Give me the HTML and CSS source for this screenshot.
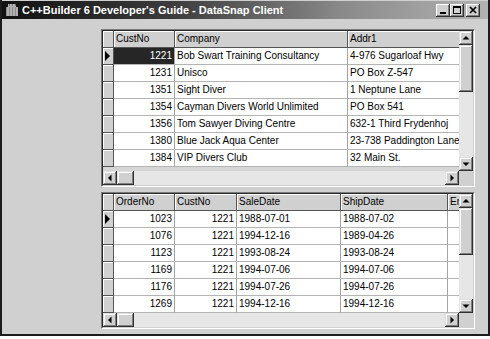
FILE: index.html
```html
<!DOCTYPE html>
<html>
<head>
<meta charset="utf-8">
<title>DataSnap Client</title>
<link rel="stylesheet" href="styles.css">
</head>
<body>
<div class="window">
  <div class="titlebar">
    <svg class="appicon" width="14" height="14" viewBox="0 0 14 14">
      <rect x="1" y="4" width="12" height="9" fill="#8c8c8c"/>
      <path d="M3 4v9M6 4v9M9 4v9M12 4v9" stroke="#d6d6d6" stroke-width="1"/>
      <rect x="3" y="1" width="8" height="3" fill="#b4b4b4"/>
      <path d="M4 2h1M7 2h1M10 2h1" stroke="#3a3a3a"/>
    </svg>
    <span class="title">C++Builder 6 Developer's Guide - DataSnap Client</span>
    <div class="capbtns">
      <div class="capbtn"><svg width="14" height="13" viewBox="0 0 14 13"><rect x="4" y="8" width="6" height="2" fill="#000"/></svg></div>
      <div class="capbtn"><svg width="14" height="13" viewBox="0 0 14 13"><path d="M3 2h8v8H3z M4 4h6v5H4z" fill="#000" fill-rule="evenodd"/></svg></div>
      <div class="capbtn close"><svg width="14" height="13" viewBox="0 0 14 13"><path d="M4 3l6 6M10 3l-6 6" stroke="#000" stroke-width="1.7"/></svg></div>
    </div>
  </div>

  <div class="client">
    <div class="grid grid-top">
      <div class="grid-inner">
        <div class="cells cols-top">
          <div class="row"><div class="c fx"></div><div class="c fx">CustNo</div><div class="c fx">Company</div><div class="c fx">Addr1</div></div>
          <div class="row"><div class="c fx ind"><span class="ptr"></span></div><div class="c num sel">1221</div><div class="c">Bob Swart Training Consultancy</div><div class="c">4-976 Sugarloaf Hwy</div></div>
          <div class="row"><div class="c fx"></div><div class="c num">1231</div><div class="c">Unisco</div><div class="c">PO Box Z-547</div></div>
          <div class="row"><div class="c fx"></div><div class="c num">1351</div><div class="c">Sight Diver</div><div class="c">1 Neptune Lane</div></div>
          <div class="row"><div class="c fx"></div><div class="c num">1354</div><div class="c">Cayman Divers World Unlimited</div><div class="c">PO Box 541</div></div>
          <div class="row"><div class="c fx"></div><div class="c num">1356</div><div class="c">Tom Sawyer Diving Centre</div><div class="c">632-1 Third Frydenhoj</div></div>
          <div class="row"><div class="c fx"></div><div class="c num">1380</div><div class="c">Blue Jack Aqua Center</div><div class="c">23-738 Paddington Lane</div></div>
          <div class="row"><div class="c fx"></div><div class="c num">1384</div><div class="c">VIP Divers Club</div><div class="c">32 Main St.</div></div>
        </div>
        <div class="vscroll">
          <div class="sb-btn"><svg width="14" height="14" viewBox="0 0 14 14"><path d="M7 5l3.5 3.5h-7z" fill="#000"/></svg></div>
          <div class="sb-thumb v"></div>
          <div class="sb-track"></div>
          <div class="sb-btn"><svg width="14" height="14" viewBox="0 0 14 14"><path d="M3.5 5.5h7L7 9z" fill="#000"/></svg></div>
        </div>
        <div class="hscroll">
          <div class="sb-btn"><svg width="14" height="14" viewBox="0 0 14 14"><path d="M5 7l3.5-3.5v7z" fill="#000"/></svg></div>
          <div class="sb-thumb h"></div>
          <div class="sb-track"></div>
          <div class="sb-btn"><svg width="14" height="14" viewBox="0 0 14 14"><path d="M5.5 3.5v7L9 7z" fill="#000"/></svg></div>
        </div>
        <div class="corner"></div>
      </div>
    </div>

    <div class="grid grid-bottom">
      <div class="grid-inner">
        <div class="cells cols-bottom">
          <div class="row"><div class="c fx"></div><div class="c fx">OrderNo</div><div class="c fx">CustNo</div><div class="c fx">SaleDate</div><div class="c fx">ShipDate</div><div class="c fx">EmpNo</div></div>
          <div class="row"><div class="c fx ind"><span class="ptr"></span></div><div class="c num">1023</div><div class="c num">1221</div><div class="c">1988-07-01</div><div class="c">1988-07-02</div><div class="c"></div></div>
          <div class="row"><div class="c fx"></div><div class="c num">1076</div><div class="c num">1221</div><div class="c">1994-12-16</div><div class="c">1989-04-26</div><div class="c"></div></div>
          <div class="row"><div class="c fx"></div><div class="c num">1123</div><div class="c num">1221</div><div class="c">1993-08-24</div><div class="c">1993-08-24</div><div class="c"></div></div>
          <div class="row"><div class="c fx"></div><div class="c num">1169</div><div class="c num">1221</div><div class="c">1994-07-06</div><div class="c">1994-07-06</div><div class="c"></div></div>
          <div class="row"><div class="c fx"></div><div class="c num">1176</div><div class="c num">1221</div><div class="c">1994-07-26</div><div class="c">1994-07-26</div><div class="c"></div></div>
          <div class="row"><div class="c fx"></div><div class="c num">1269</div><div class="c num">1221</div><div class="c">1994-12-16</div><div class="c">1994-12-16</div><div class="c"></div></div>
        </div>
        <div class="vscroll">
          <div class="sb-btn"><svg width="14" height="14" viewBox="0 0 14 14"><path d="M7 5l3.5 3.5h-7z" fill="#000"/></svg></div>
          <div class="sb-thumb v"></div>
          <div class="sb-track"></div>
          <div class="sb-btn"><svg width="14" height="14" viewBox="0 0 14 14"><path d="M3.5 5.5h7L7 9z" fill="#000"/></svg></div>
        </div>
        <div class="hscroll">
          <div class="sb-btn"><svg width="14" height="14" viewBox="0 0 14 14"><path d="M5 7l3.5-3.5v7z" fill="#000"/></svg></div>
          <div class="sb-thumb h"></div>
          <div class="sb-track"></div>
          <div class="sb-btn"><svg width="14" height="14" viewBox="0 0 14 14"><path d="M5.5 3.5v7L9 7z" fill="#000"/></svg></div>
        </div>
        <div class="corner"></div>
      </div>
    </div>
  </div>
</div>
</body>
</html>
```

FILE: styles.css
```css
* { box-sizing: border-box; }

html, body {
  margin: 0;
  padding: 0;
  background: #ffffff;
}

body {
  width: 490px;
  height: 339px;
  overflow: hidden;
  font-family: "Liberation Sans", Arial, sans-serif;
  font-size: 10px;
  color: #000;
}

.window {
  width: 490px;
  height: 336px;
  background: #d0d0d0;
  border-left: 2px solid #1c1c1c;
  border-right: 2px solid #1c1c1c;
  border-bottom: 2px solid #1c1c1c;
  padding-top: 1px;
  display: flex;
  flex-direction: column;
}

/* ---------- title bar ---------- */
.titlebar {
  height: 18px;
  display: flex;
  align-items: center;
  background: linear-gradient(to right, #111111 0%, #3c3c3c 35%, #8a8a8a 70%, #b2b2b2 100%);
  padding-left: 3px;
}

.appicon {
  flex: none;
  display: block;
}

.title {
  margin-left: 3px;
  color: #ffffff;
  font-weight: bold;
  font-size: 11px;
  white-space: nowrap;
}

.capbtns {
  margin-left: auto;
  padding-right: 8px;
  display: flex;
}

.capbtn {
  width: 14px;
  height: 13px;
  background: #d0d0d0;
  box-shadow: inset -1px -1px #303030, inset 1px 1px #ffffff, inset -2px -2px #808080;
}

.capbtn svg { display: block; }

.capbtn.close { margin-left: 2px; }

/* ---------- client ---------- */
.client {
  flex: 1;
  padding: 10px 0 0 99px;
  display: flex;
  flex-direction: column;
  gap: 5px;
}

.grid {
  width: 374px;
  border: 1px solid;
  border-color: #7a7a7a #ffffff #ffffff #7a7a7a;
}

.grid-top { height: 158px; }
.grid-bottom { height: 137px; }

.grid-inner {
  height: 100%;
  border: 1px solid;
  border-color: #2a2a2a #d0d0d0 #d0d0d0 #2a2a2a;
  display: grid;
  grid-template-columns: 1fr 14px;
  grid-template-rows: 1fr 14px;
}

.cells {
  overflow: hidden;
  background: #d6d6d6;
  min-width: 0;
}

.row {
  display: grid;
  height: 17px;
}

.cols-top .row { grid-template-columns: 11px 61px 173px 120px; }
.cols-bottom .row { grid-template-columns: 11px 61px 62px 104px 107px 40px; }

.c {
  height: 17px;
  background: #ffffff;
  border-right: 1px solid #a4a4a4;
  border-bottom: 1px solid #b4b4b4;
  padding: 0 2px;
  line-height: 16px;
  white-space: nowrap;
  overflow: hidden;
}

.c.num { text-align: right; }

.c.fx {
  background: #d0d0d0;
  box-shadow: inset 1px 1px #ffffff;
  border-right-color: #555555;
  border-bottom-color: #555555;
}

.c.sel {
  background: #262626;
  color: #ffffff;
}

.c.ind {
  padding: 0 0 0 2px;
  display: flex;
  align-items: center;
}

.ptr {
  width: 0;
  height: 0;
  border-left: 5px solid #000;
  border-top: 5px solid transparent;
  border-bottom: 5px solid transparent;
}

/* ---------- scrollbars ---------- */
.vscroll {
  display: flex;
  flex-direction: column;
}

.hscroll {
  display: flex;
}

.sb-btn, .sb-thumb {
  flex: none;
  background: #d0d0d0;
  box-shadow: inset -1px -1px #303030, inset 1px 1px #e0e0e0, inset -2px -2px #808080, inset 2px 2px #ffffff;
}

.sb-btn {
  width: 14px;
  height: 14px;
}

.sb-btn svg { display: block; }

.sb-thumb.v { width: 14px; height: 47px; }
.sb-thumb.h { width: 17px; height: 14px; }

.sb-track {
  flex: 1;
  background: #e6e6e6;
}

.corner {
  background: #d0d0d0;
}
```
